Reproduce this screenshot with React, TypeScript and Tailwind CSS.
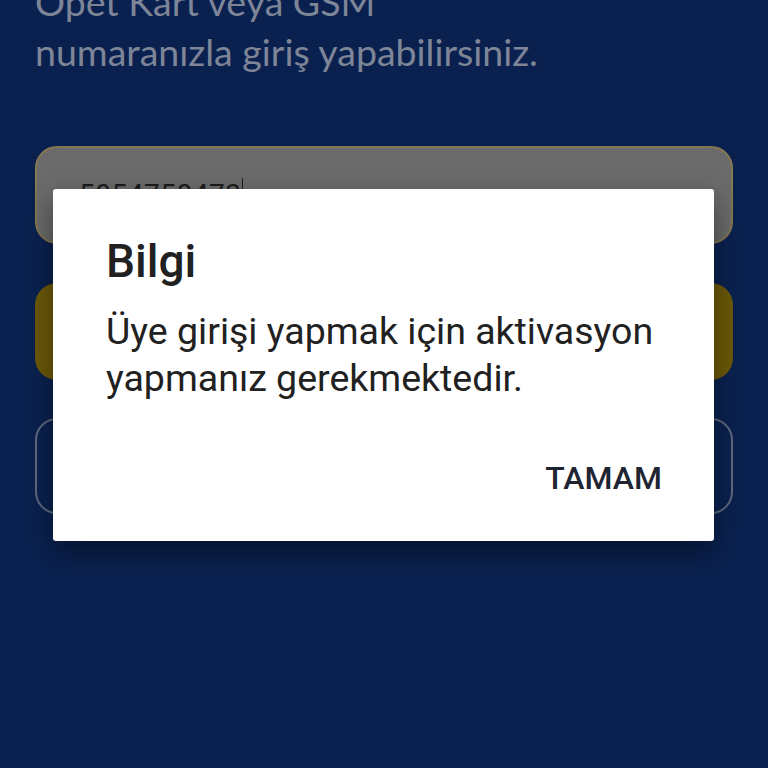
import React from 'react';

export default function App() {
  return (
    <div className="relative w-[768px] h-[768px] overflow-hidden bg-[#0a2150]" style={{ fontFamily: 'Roboto, sans-serif' }}>
      {/* Login form behind the dialog */}
      <div className="flex flex-col px-[35px] -mt-[23px]">
        <p className="text-[37.5px] leading-[50px] text-[#7d8597]" style={{ fontFamily: 'Lato, sans-serif' }}>
          Opet Kart veya GSM
          <br />
          numaranızla giriş yapabilirsiniz.
        </p>
        <div className="mt-[69px] h-[98px] rounded-[22px] bg-[#6b6b6b] border-2 border-[#85784f] flex items-start pl-[42px] pt-[26px]">
          <span className="text-[28px] text-[#1b1b1b] tracking-[0.5px]">5054750473</span>
          <span className="ml-[1px] mt-[4px] w-[1px] h-[30px] bg-[#1b1b1b]" />
        </div>
        <div className="mt-[39px] h-[97px] rounded-[22px] bg-[#6c5a08]" />
        <div className="mt-[38px] h-[96px] rounded-[22px] border-2 border-[#5f6a80]" />
      </div>

      {/* Dialog */}
      <div className="absolute left-[53px] top-[189px] w-[661px] h-[352px] bg-white rounded-[3px] shadow-[0_12px_30px_rgba(0,0,0,0.45)] flex flex-col">
        <h2 className="pl-[53px] pt-[44px] text-[46px] leading-[56px] font-medium text-[#212121]">Bilgi</h2>
        <p className="pl-[53px] pr-[30px] mt-[19px] text-[37.5px] leading-[47px] text-[#212121]">
          Üye girişi yapmak için aktivasyon yapmanız gerekmektedir.
        </p>
        <div className="flex justify-end pr-[52px] mt-[52px]">
          <span className="text-[32px] font-medium text-[#1f2433]">TAMAM</span>
        </div>
      </div>
    </div>
  );
}
